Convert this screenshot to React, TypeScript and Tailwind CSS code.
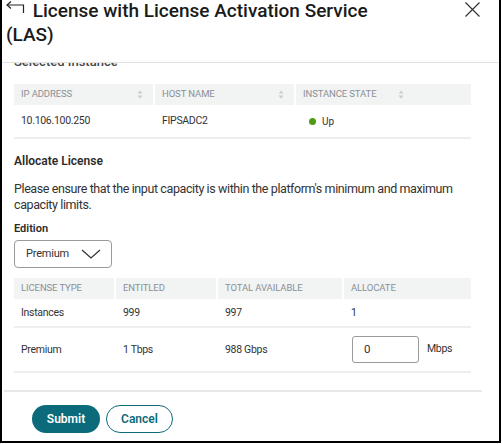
import React from 'react';

function BackArrow() {
  return (
    <svg width="19" height="12" viewBox="0 0 19 12" fill="none" stroke="#222" strokeWidth="1.2" className="inline-block align-top mt-[2px]">
      <path d="M5 0.5 L1 4 L5 7.5" />
      <path d="M1 4 H17.5 V12" />
    </svg>
  );
}

function CloseIcon() {
  return (
    <svg width="15" height="15" viewBox="0 0 15 15" fill="none" stroke="#333" strokeWidth="1.2">
      <path d="M0.5 0.5 L14.5 14.5 M14.5 0.5 L0.5 14.5" />
    </svg>
  );
}

function SortIcon() {
  return (
    <svg width="6" height="9" viewBox="0 0 6 9" fill="#c9cdd1">
      <path d="M3 0.5 L5.5 3.5 H0.5 Z" />
      <path d="M3 8.5 L5.5 5.5 H0.5 Z" />
    </svg>
  );
}

function Chevron() {
  return (
    <svg width="20" height="10" viewBox="0 0 20 10" fill="none" stroke="#333" strokeWidth="1.3">
      <path d="M1 1 L10 9 L19 1" />
    </svg>
  );
}

const headCell = 'h-[21px] bg-[#f2f3f3] flex items-center pl-[7px] text-[9.5px] tracking-[-0.1px] uppercase text-[#8b9096]';
const bodyText = 'text-[10.5px] tracking-[-0.3px] text-[#333]';

export default function App() {
  return (
    <div className="w-[502px] h-[444px] bg-white overflow-hidden" style={{ fontFamily: 'Roboto, "Noto Sans", sans-serif' }}>
      <div className="w-[501px] h-[443px] border-l-2 border-r-2 border-b-2 border-black flex flex-col">
        {/* header */}
        <div className="h-[63px] shrink-0 border-b border-[#e2e2e2] flex justify-between items-start">
          <h1 className="w-[390px] pl-[4px] -mt-[1px] text-[19px] leading-[24px] font-medium text-[#1a1a1a]">
            <BackArrow /> <span className="ml-[3px]">License with License Activation Service (LAS)</span>
          </h1>
          <div className="mt-[2px] mr-[19px]">
            <CloseIcon />
          </div>
        </div>

        {/* scrolled content */}
        <div className="h-[327px] shrink-0 overflow-hidden pl-[12px]">
          <h2 className="-mt-[9px] text-[13px] leading-[16px] font-medium text-[#444]">Selected Instance</h2>

          <div className="mt-[14px] w-[457px]">
            <div className="flex gap-[2px]">
              <div className={`${headCell} w-[139px] justify-between pr-[10px]`}>
                <span>IP Address</span>
                <SortIcon />
              </div>
              <div className={`${headCell} w-[139px] justify-between pr-[10px]`}>
                <span>Host Name</span>
                <SortIcon />
              </div>
              <div className={`${headCell} w-[175px] gap-[22px]`}>
                <span>Instance State</span>
                <SortIcon />
              </div>
            </div>
            <div className="h-[34px] flex items-center border-b-2 border-[#eeeeee]">
              <div className={`${bodyText} w-[141px] pl-[7px]`}>10.106.100.250</div>
              <div className={`${bodyText} w-[141px] pl-[7px]`}>FIPSADC2</div>
              <div className="flex items-center pl-[13px] gap-[6px]">
                <span className="w-[7px] h-[7px] rounded-full bg-[#4c9a16]" />
                <span className="text-[10px] text-[#333]">Up</span>
              </div>
            </div>
          </div>

          <h2 className="mt-[14px] text-[12px] leading-[16px] font-semibold text-[#2b2b2b]">Allocate License</h2>
          <p className="mt-[12px] w-[470px] text-[12.5px] tracking-[-0.4px] leading-[16px] text-[#333]">
            Please ensure that the input capacity is within the platform's minimum and maximum capacity limits.
          </p>

          <div className="mt-[8px] text-[11px] leading-[16px] font-semibold text-[#2b2b2b]">Edition</div>
          <button className="mt-[3px] w-[98px] h-[28px] border border-[#9a9a9a] rounded-[4px] flex items-center justify-between pl-[11px] pr-[10px]">
            <span className="text-[11px] tracking-[-0.2px] text-[#333]">Premium</span>
            <Chevron />
          </button>

          <div className="mt-[10px] w-[457px]">
            <div className="flex gap-[2px]">
              <div className={`${headCell} w-[100px]`}>License Type</div>
              <div className={`${headCell} w-[100px]`}>Entitled</div>
              <div className={`${headCell} w-[124px]`}>Total Available</div>
              <div className={`${headCell} w-[127px]`}>Allocate</div>
            </div>
            <div className="h-[29px] flex items-center border-b-2 border-[#eeeeee]">
              <div className={`${bodyText} w-[102px] pl-[7px]`}>Instances</div>
              <div className={`${bodyText} w-[102px] pl-[7px]`}>999</div>
              <div className={`${bodyText} w-[126px] pl-[7px]`}>997</div>
              <div className={`${bodyText} pl-[7px]`}>1</div>
            </div>
            <div className="h-[45px] flex items-center border-b-2 border-[#eeeeee]">
              <div className={`${bodyText} w-[102px] pl-[7px]`}>Premium</div>
              <div className={`${bodyText} w-[102px] pl-[7px]`}>1 Tbps</div>
              <div className={`${bodyText} w-[126px] pl-[7px]`}>988 Gbps</div>
              <div className="flex items-center pl-[8px] gap-[8px]">
                <div className="w-[67px] h-[27px] border border-[#9a9a9a] rounded-[3px] flex items-center pl-[11px] text-[11.5px] text-[#333]">0</div>
                <span className={`${bodyText} -mt-[2px]`}>Mbps</span>
              </div>
            </div>
          </div>
        </div>

        {/* footer */}
        <div className="ml-[2px] w-[478px] border-t-2 border-[#e8e8e8] pt-[13px] pl-[28px] flex gap-[6px]">
          <button className="w-[68px] h-[28px] rounded-full bg-[#0b6b7b] text-white text-[12px] font-semibold">Submit</button>
          <button className="w-[67px] h-[28px] rounded-full border-[1.5px] border-[#0b6b7b] text-[#0b6b7b] text-[12px] font-semibold">Cancel</button>
        </div>
      </div>
    </div>
  );
}
